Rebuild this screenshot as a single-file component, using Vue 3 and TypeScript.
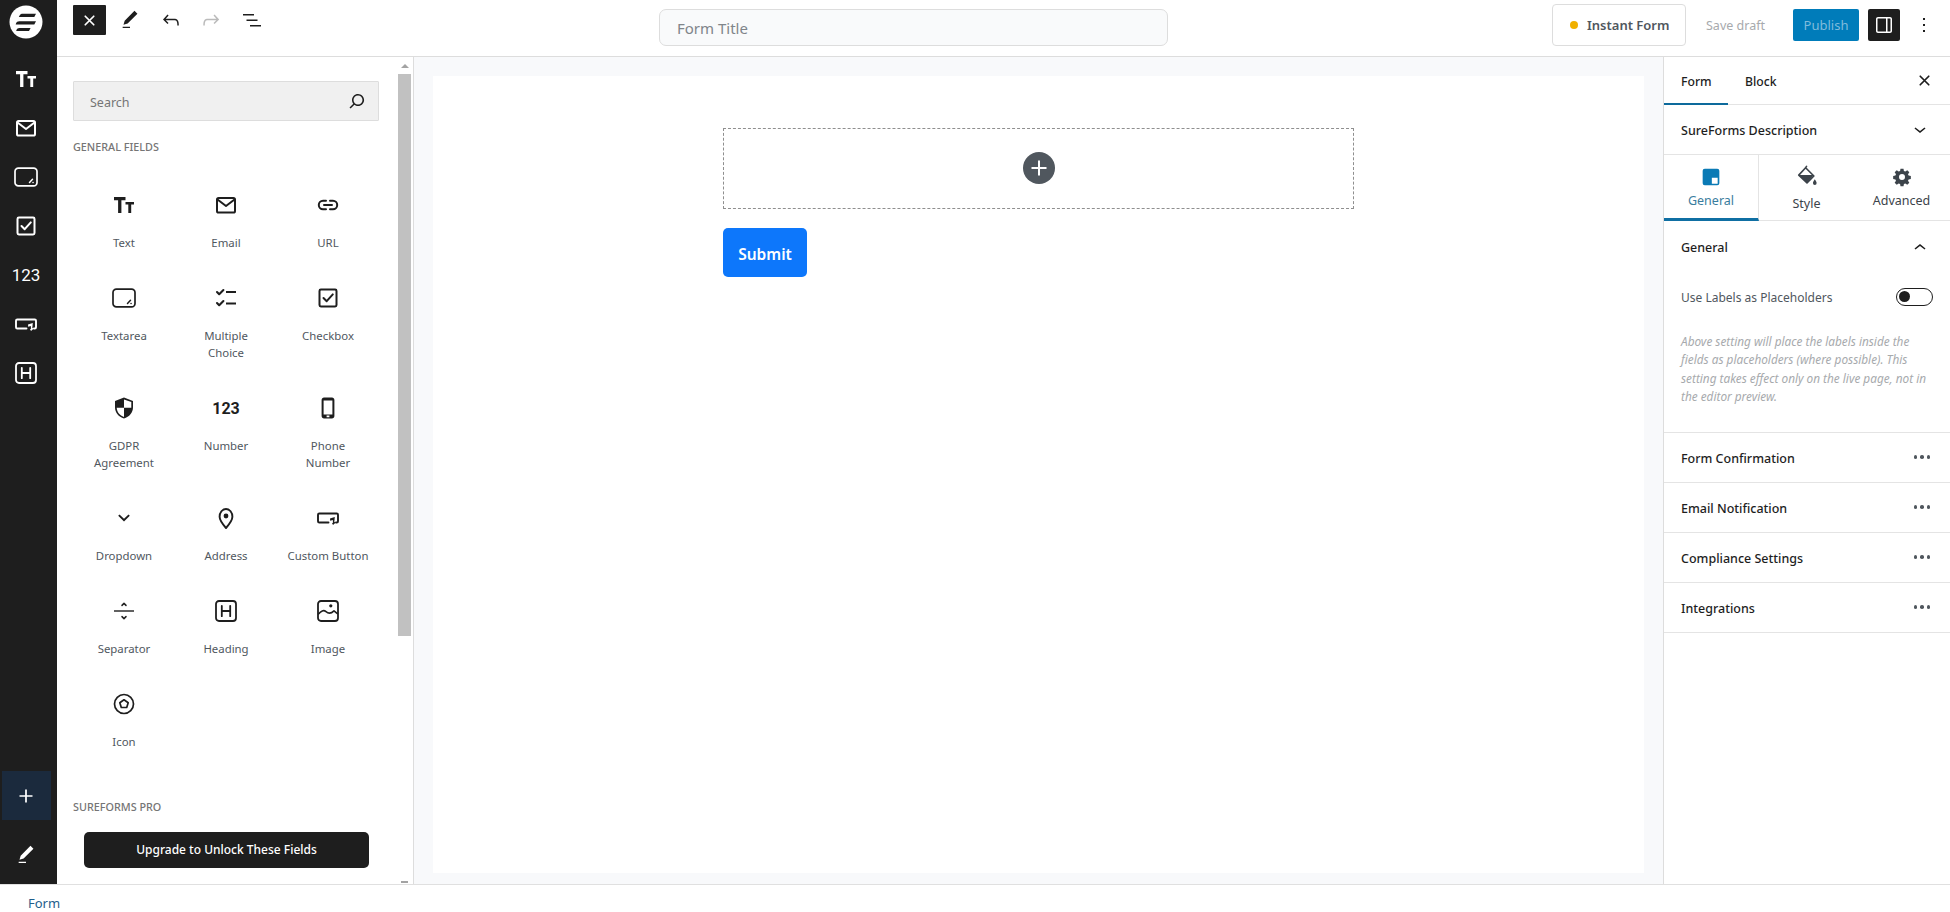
<script setup lang="ts">
import { h } from 'vue'

type Shape = { t: 'p' | 's' | 'r' | 'c'; d?: string; a?: Record<string, number | string> }

const Icon = (props: { name: string; size?: number }) => {
  const shapes: Shape[] = icons[props.name] || []
  return h(
    'svg',
    { viewBox: '0 0 24 24', width: props.size || 24, height: props.size || 24, class: 'ico' },
    shapes.map((s) => {
      if (s.t === 'p') return h('path', { d: s.d, fill: 'currentColor' })
      if (s.t === 's')
        return h('path', {
          d: s.d,
          fill: 'none',
          stroke: 'currentColor',
          'stroke-width': s.a?.w ?? 1.8,
          'stroke-linecap': 'round',
          'stroke-linejoin': 'round',
        })
      if (s.t === 'r') return h('rect', { fill: 'none', stroke: 'currentColor', 'stroke-width': 2, ...s.a })
      return h('circle', { fill: 'currentColor', ...s.a })
    }),
  )
}
Icon.props = ['name', 'size']

const icons: Record<string, Shape[]> = {
  text: [
    { t: 'p', d: 'M2 4h11.500v3.200h-4.100V20H6.100V7.200H2z' },
    { t: 'p', d: 'M13.500 9H22v2.500h-2.800V20h-2.900v-8.500h-2.800z' },
  ],
  email: [
    { t: 'r', a: { x: 3, y: 5, width: 18, height: 14.500, rx: 1.600 } },
    { t: 's', d: 'M3.500 6.500l8.500 6.500 8.500-6.500', a: { w: 2 } },
  ],
  url: [{ t: 's', d: 'M10 7.800H7a4.200 4.200 0 0 0 0 8.400h3M14 7.800h3a4.200 4.200 0 0 1 0 8.400h-3M8 12h8', a: { w: 2 } }],
  textarea: [
    { t: 'r', a: { x: 1, y: 3.200, width: 22, height: 17.600, rx: 3.400, 'stroke-width': 1.700 } },
    { t: 's', d: 'M15.500 17.500l3-3.200M19 17.500h.1', a: { w: 1.500 } },
  ],
  multi: [
    { t: 's', d: 'M3 6l2.200 2.200L9.400 4M3 17l2.200 2.200L9.400 15', a: { w: 2.100 } },
    { t: 'p', d: 'M12 5h10v2.100H12zM12 16.500h10v2.100H12z' },
  ],
  checkbox: [
    { t: 'r', a: { x: 3.500, y: 3.500, width: 17, height: 17, rx: 1.400, 'stroke-width': 2 } },
    { t: 's', d: 'M7.500 12l3.200 3.200L16.800 8.400', a: { w: 2 } },
  ],
  shield: [
    { t: 'p', d: 'M12 1.500l9 3.400v6.300c0 5.400-3.700 9.700-9 11.300-5.300-1.600-9-5.900-9-11.300V4.900zM12 3.400v8.400h7.300V6zM12 11.800H4.700c.2 4.300 3.200 7.700 7.300 9.200z' },
  ],
  phone: [
    { t: 'p', d: 'M8 1.500h8c1.300 0 2.400 1 2.400 2.400v16.200c0 1.400-1.100 2.400-2.400 2.400H8c-1.300 0-2.400-1-2.400-2.400V3.900c0-1.400 1.100-2.400 2.400-2.400zM7.600 4.600v14h8.800v-14zM10.600 19.600v1.600h2.800v-1.600z' },
  ],
  chevron: [{ t: 'p', d: 'M17.800 9.800L12 15.400 6.200 9.800l1.300-1.400 4.500 4.300 4.500-4.300z' }],
  pin: [
    { t: 's', d: 'M12 22c-3.800-4.300-6.400-7.800-6.400-11.200C5.600 6.400 8.300 3 12 3s6.400 3.400 6.400 7.800c0 3.400-2.600 6.900-6.400 11.200z', a: { w: 1.900 } },
    { t: 'c', a: { cx: 12, cy: 10, r: 2.400 } },
  ],
  button: [
    { t: 's', d: 'M12.500 16.500H3.300c-.7 0-1.300-.6-1.300-1.300V8.800C2 8.100 2.600 7.500 3.300 7.500h17.400c.7 0 1.300.6 1.300 1.300v6.400c0 .7-.6 1.300-1.300 1.300h-.7', a: { w: 1.900 } },
    { t: 'p', d: 'M14 12.500l4.800-1.500-.5 5 1.500.4-2.800 2.500-1-1.800 1-.4-.2-2.600-2.600.6z' },
  ],
  separator: [
    { t: 'p', d: 'M2 11.300h20v1.400H2z' },
    { t: 's', d: 'M10 6.400l2-2 2 2M10 17.600l2 2 2-2', a: { w: 1.500 } },
  ],
  heading: [
    { t: 'r', a: { x: 2, y: 2, width: 20, height: 20, rx: 3, 'stroke-width': 1.800 } },
    { t: 's', d: 'M7.800 6.800v10.400M16.200 6.800v10.400M7.800 12h8.400', a: { w: 1.800 } },
  ],
  image: [
    { t: 'r', a: { x: 2, y: 2, width: 20, height: 20, rx: 3, 'stroke-width': 1.800 } },
    { t: 's', d: 'M2.500 15c2.500-3 5-4.500 7.500-2.400 2.800 2.400 5.500 1.600 8-.8l3.400 2.800', a: { w: 1.600 } },
    { t: 'c', a: { cx: 14.800, cy: 6.800, r: 1.600 } },
  ],
  star: [
    { t: 'r', a: { x: 2.500, y: 2.500, width: 19, height: 19, rx: 9.500, 'stroke-width': 1.700 } },
    { t: 's', d: 'M12 7.800l4.200 3-1.500 4.700H9.300l-1.500-4.700z', a: { w: 1.700 } },
  ],
  pen: [{ t: 'p', d: 'M20.100 5.100L16.900 2 6.200 12.700l-1.300 4.400 4.500-1.300L20.100 5.100zM4 20.800h8v-1.500H4v1.500z' }],
  undo: [{ t: 'p', d: 'M18.300 11.700c-.6-.6-1.400-.9-2.300-.9H6.700l2.900-3.300-1.100-1-4.500 5L8.500 16l1-1-2.700-2.700H16c.5 0 .9.2 1.300.5 1 1 1 3.400 1 4.500v.3h1.500v-.2c0-1.500 0-4.300-1.500-5.700z' }],
  redo: [{ t: 'p', d: 'M15.600 6.500l-1.100 1 2.900 3.300H8c-.9 0-1.700.3-2.300.9-1.400 1.500-1.400 4.200-1.400 5.600v.2h1.500v-.3c0-1.100 0-3.500 1-4.500.3-.3.700-.5 1.300-.5h9.200L14.500 15l1.100 1.100 4.600-4.600-4.600-5z' }],
  list: [{ t: 'p', d: 'M3 6h11v1.500H3V6zm3.500 5.500h11V13h-11v-1.500zM21 17H10v1.500h11V17z' }],
  close: [{ t: 's', d: 'M6 6l12 12M18 6L6 18', a: { w: 2.400 } }],
  plus: [{ t: 'p', d: 'M18 11.200h-5.200V6h-1.600v5.200H6v1.600h5.200V18h1.600v-5.200H18z' }],
  kebab: [{ t: 'p', d: 'M13 19h-2v-2h2v2zm0-6h-2v-2h2v2zm0-6h-2V5h2v2z' }],
  search: [{ t: 'p', d: 'M13 5c-3.300 0-6 2.700-6 6 0 1.400.5 2.700 1.300 3.700l-3.800 3.800 1.100 1.100 3.800-3.800c1 .8 2.300 1.300 3.700 1.300 3.300 0 6-2.700 6-6S16.300 5 13 5zm0 10.500c-2.500 0-4.500-2-4.500-4.500s2-4.500 4.500-4.500 4.500 2 4.500 4.500-2 4.500-4.500 4.500z' }],
  down: [{ t: 'p', d: 'M17.500 10.600L12 15l-5.500-4.400.9-1.200L12 13l4.500-3.600 1 1.200z' }],
  up: [{ t: 'p', d: 'M6.500 13.400L12 9l5.500 4.400-.9 1.200L12 11l-4.500 3.600-1-1.200z' }],
  sidebar: [{ t: 'p', d: 'M18 4H6c-1.100 0-2 .9-2 2v12c0 1.100.9 2 2 2h12c1.100 0 2-.9 2-2V6c0-1.100-.9-2-2-2zm-4 14.500H6c-.3 0-.5-.2-.5-.5V6c0-.3.2-.5.5-.5h8v13zm4.500-.5c0 .3-.2.5-.5.5h-2.500v-13H18c.3 0 .5.2.5.5v12z' }],
  layout: [{ t: 'p', d: 'M4.500 2h15A2.500 2.500 0 0 1 22 4.500v15a2.500 2.500 0 0 1-2.500 2.500h-15A2.500 2.500 0 0 1 2 19.500v-15A2.500 2.500 0 0 1 4.500 2zM13 13v7h7v-7z' }],
  bucket: [
    { t: 's', d: 'M11.500 1.500L10 3.500M10.500 3L19.500 12 12 19.500 3 11z', a: { w: 1.800 } },
    { t: 'p', d: 'M3 11h16.500L12 19.500z' },
    { t: 'p', d: 'M20.500 15.500c1.300 2 2 3 2 4.200a2 2 0 0 1-4 0c0-1.200.7-2.200 2-4.200z' },
  ],
  gear: [{ t: 'p', d: 'M10.200 2h3.600l.5 2.700 1.700.7 2.300-1.600 2.500 2.500-1.600 2.300.7 1.700 2.700.5v3.600l-2.700.5-.7 1.700 1.600 2.300-2.500 2.500-2.300-1.600-1.700.7-.5 2.700h-3.600l-.5-2.700-1.700-.7-2.300 1.600-2.500-2.500 1.600-2.300-.7-1.700-2.700-.5v-3.600l2.700-.5.7-1.700-1.600-2.300 2.500-2.500 2.300 1.600 1.700-.7zM12 8.400a3.600 3.600 0 1 0 0 7.200 3.600 3.600 0 0 0 0-7.200z' }],
}

const rail = ['text', 'email', 'textarea', 'checkbox', 'num', 'button', 'heading']

const fields = [
  { icon: 'text', label: 'Text' },
  { icon: 'email', label: 'Email' },
  { icon: 'url', label: 'URL' },
  { icon: 'textarea', label: 'Textarea' },
  { icon: 'multi', label: 'Multiple\nChoice' },
  { icon: 'checkbox', label: 'Checkbox' },
  { icon: 'shield', label: 'GDPR\nAgreement' },
  { icon: 'num', label: 'Number' },
  { icon: 'phone', label: 'Phone\nNumber' },
  { icon: 'chevron', label: 'Dropdown' },
  { icon: 'pin', label: 'Address' },
  { icon: 'button', label: 'Custom Button' },
  { icon: 'separator', label: 'Separator' },
  { icon: 'heading', label: 'Heading' },
  { icon: 'image', label: 'Image' },
  { icon: 'star', label: 'Icon' },
]

const panels = ['Form Confirmation', 'Email Notification', 'Compliance Settings', 'Integrations']
</script>

<template>
  <div class="page">
    <div class="main">
      <aside class="rail">
        <div class="logo">
          <svg viewBox="0 0 34 34" width="34" height="34">
            <circle cx="17" cy="17" r="16.500" fill="#fff" />
            <path d="M10.500 10.800c.6-1.400 1.800-2 3.200-2H27l-1.700 3.200H9.800zM7 18.600c.5-1.600 1.700-2.400 3.200-2.400H27l-1.700 3.300H6.700zM7.400 25.200c.5-1.400 1.600-2.200 3-2.200h11.200L20 26H7.200z" fill="#1e1e1e" />
          </svg>
        </div>
        <div class="rail-list">
          <div v-for="r in rail" :key="r" class="rail-item">
            <span v-if="r === 'num'" class="rail-num">123</span>
            <Icon v-else :name="r" />
          </div>
        </div>
        <div class="rail-add"><Icon name="plus" :size="26" /></div>
        <div class="rail-pen"><Icon name="pen" :size="22" /></div>
      </aside>

      <div class="work">
        <header class="top">
          <div class="top-left">
            <button class="tool tool-x"><Icon name="close" :size="17" /></button>
            <button class="tool"><Icon name="pen" :size="22" /></button>
            <button class="tool"><Icon name="undo" /></button>
            <button class="tool tool-off"><Icon name="redo" /></button>
            <button class="tool"><Icon name="list" /></button>
          </div>
          <div class="title-input">Form Title</div>
          <div class="top-right">
            <div class="instant"><span class="dot"></span>Instant Form</div>
            <span class="draft">Save draft</span>
            <button class="publish">Publish</button>
            <button class="side-toggle"><Icon name="sidebar" /></button>
            <span class="more"><Icon name="kebab" /></span>
          </div>
        </header>

        <div class="body">
          <section class="inserter">
            <div class="ins-scroll">
              <div class="search">
                <span>Search</span>
                <Icon name="search" :size="24" />
              </div>
              <div class="group-title first">General Fields</div>
              <div class="grid">
                <div v-for="f in fields" :key="f.label" class="field">
                  <div class="field-icon">
                    <span v-if="f.icon === 'num'" class="num">123</span>
                    <Icon v-else :name="f.icon" />
                  </div>
                  <div class="field-label">{{ f.label }}</div>
                </div>
              </div>
              <div class="group-title pro">SureForms Pro</div>
              <button class="upgrade">Upgrade to Unlock These Fields</button>
            </div>
            <div class="scrollbar">
              <span class="arrow arrow-up"></span>
              <span class="thumb"></span>
              <span class="arrow arrow-down"></span>
            </div>
          </section>

          <section class="canvas">
            <div class="sheet">
              <div class="form">
                <div class="dropzone">
                  <span class="add"><Icon name="plus" :size="30" /></span>
                </div>
                <button class="submit">Submit</button>
              </div>
            </div>
          </section>

          <aside class="side">
            <div class="side-tabs">
              <span class="side-tab active">Form</span>
              <span class="side-tab">Block</span>
              <span class="side-close"><Icon name="close" :size="17" /></span>
            </div>
            <div class="desc">
              <span>SureForms Description</span>
              <Icon name="down" />
            </div>
            <div class="modes">
              <div class="mode on">
                <Icon name="layout" :size="20" />
                <span>General</span>
              </div>
              <div class="mode style">
                <Icon name="bucket" :size="22" />
                <span>Style</span>
              </div>
              <div class="mode">
                <Icon name="gear" :size="20" />
                <span>Advanced</span>
              </div>
            </div>
            <div class="general">
              <div class="general-head">
                <span>General</span>
                <Icon name="up" />
              </div>
              <div class="toggle-row">
                <span>Use Labels as Placeholders</span>
                <span class="toggle"><i></i></span>
              </div>
              <p class="hint">Above setting will place the labels inside the fields as placeholders (where possible). This setting takes effect only on the live page, not in the editor preview.</p>
            </div>
            <div v-for="p in panels" :key="p" class="panel">
              <span>{{ p }}</span>
              <span class="dots"><i></i><i></i><i></i></span>
            </div>
          </aside>
        </div>
      </div>
    </div>
    <footer class="foot"><span>Form</span></footer>
  </div>
</template>

<style>
html, body { margin: 0; overflow: hidden; background: #fff; }
</style>

<style scoped>
.page {
  width: 1950px;
  height: 912px;
  display: flex;
  flex-direction: column;
  font-family: "Noto Sans", "Open Sans", sans-serif;
  color: #1e1e1e;
  overflow: hidden;
}
.ico { display: block; flex: none; }
button { border: 0; font-family: inherit; padding: 0; cursor: pointer; }
.main { height: 884px; display: flex; flex: none; }
.rail {
  width: 57px;
  box-sizing: border-box;
  padding-right: 5px;
  background: #1e1e1e;
  color: #fff;
  display: flex;
  flex-direction: column;
  align-items: center;
  flex: none;
}
.logo { height: 34px; margin-top: 5px; }
.rail-list { margin-top: 15px; display: flex; flex-direction: column; }
.rail-item { height: 49px; display: flex; align-items: center; justify-content: center; }
.rail-num { font-size: 17px; font-family: "Roboto", sans-serif; font-weight: 400; }
.rail-add {
  margin-top: auto;
  width: 49px;
  height: 49px;
  background: #1b2a3d;
  display: flex;
  align-items: center;
  justify-content: center;
}
.rail-pen { height: 64px; box-sizing: border-box; padding-top: 6px; display: flex; align-items: center; justify-content: center; }
.work { flex: 1; min-width: 0; display: flex; flex-direction: column; }
.top {
  height: 57px;
  flex: none;
  box-sizing: border-box;
  border-bottom: 1px solid #ddd;
  display: flex;
  align-items: flex-start;
}
.top-left { display: flex; padding: 5px 0 0 16px; width: 602px; box-sizing: border-box; flex: none; }
.tool {
  width: 40.500px;
  height: 30px;
  background: none;
  color: #1e1e1e;
  display: flex;
  align-items: center;
  justify-content: center;
}
.tool-x { width: 33px; background: #1e1e1e; color: #fff; margin-right: 4px; border-radius: 1px; }
.tool-off { color: #bbb; }
.title-input {
  width: 509px;
  height: 37px;
  margin-top: 9px;
  box-sizing: border-box;
  border: 1px solid #ddd;
  border-radius: 7px;
  background: #f9fafb;
  color: #80858a;
  font-size: 15px;
  line-height: 36px;
  padding-left: 17px;
  flex: none;
}
.top-right { flex: 1; display: flex; align-items: flex-start; padding-left: 384px; }
.instant {
  width: 134px;
  height: 42px;
  margin-top: 4px;
  box-sizing: border-box;
  border: 1px solid #ddd;
  border-radius: 4px;
  display: flex;
  align-items: center;
  padding-left: 17px;
  gap: 9px;
  font-size: 13px;
  font-weight: 600;
  color: #50575e;
  flex: none;
}
.dot { width: 8px; height: 8px; border-radius: 50%; background: #f0b000; flex: none; }
.draft { font-size: 12.500px; color: #a7aaad; margin: 17px 0 0 20px; width: 87px; flex: none; line-height: 18px; }
.publish {
  width: 66px;
  height: 32px;
  margin-top: 9px;
  background: #007cba;
  color: #7fbbdc;
  font-size: 13px;
  border-radius: 2px;
  flex: none;
}
.side-toggle {
  width: 32px;
  height: 32px;
  margin: 9px 0 0 9px;
  background: #1e1e1e;
  color: #fff;
  border-radius: 2px;
  display: flex;
  align-items: center;
  justify-content: center;
  flex: none;
}
.more { margin: 13px 0 0 12px; color: #1e1e1e; }
.body { flex: 1; min-height: 0; display: flex; }
.inserter { width: 357px; flex: none; display: flex; box-sizing: border-box; border-right: 1px solid #ddd; }
.ins-scroll { width: 340px; flex: none; box-sizing: border-box; padding: 24px 16px 0; overflow: hidden; }
.search {
  height: 40px;
  width: 306px;
  box-sizing: border-box;
  background: #f0f0f0;
  border: 1px solid #ddd;
  border-radius: 1px;
  display: flex;
  align-items: center;
  justify-content: space-between;
  padding: 0 9px 0 16px;
  color: #757575;
  font-size: 12.500px;
}
.search span { padding-top: 2px; }
.search .ico { color: #1e1e1e; }
.group-title {
  font-size: 10.800px;
  text-transform: uppercase;
  color: #757575;
  font-weight: 500;
  line-height: 16px;
}
.first { margin-top: 18px; }
.grid {
  width: 306px;
  margin-top: 22px;
  display: grid;
  grid-template-columns: repeat(3, 102px);
  align-items: start;
}
.field {
  padding: 16px 0 18.800px;
  display: flex;
  flex-direction: column;
  align-items: center;
  text-align: center;
  box-sizing: border-box;
}
.field-icon { height: 24px; display: flex; align-items: center; justify-content: center; margin-bottom: 18px; }
.num { font-family: "Roboto", sans-serif; font-weight: 700; font-size: 16px; color: #1e1e1e; }
.field-label { font-size: 11.400px; line-height: 16.500px; color: #50575e; white-space: pre-line; }
.pro { margin-top: 29px; }
.upgrade {
  display: block;
  width: 285px;
  height: 36px;
  margin: 17px 0 0 11px;
  background: #1e1e1e;
  color: #fff;
  border-radius: 5px;
  font-size: 12px;
  font-weight: 500;
}
.scrollbar { width: 13px; margin-left: 1px; flex: none; display: flex; flex-direction: column; }
.arrow { height: 17px; flex: none; display: flex; align-items: center; justify-content: center; }
.arrow-up::before {
  content: "";
  border: 4px solid transparent;
  border-bottom: 4px solid #a3a3a3;
  border-top: 0;
}
.arrow-down { margin-top: auto; height: 3px; align-items: flex-start; }
.arrow-down::before { content: ""; width: 7px; height: 2px; background: #a3a3a3; }
.thumb { width: 13px; height: 562px; background: #c1c1c1; flex: none; }
.canvas {
  flex: 1;
  min-width: 0;
  background: #f8f9fb;
  box-sizing: border-box;
  padding: 19px 19px 11px;
  display: flex;
}
.sheet { flex: 1; background: #fff; padding-top: 52px; }
.form { width: 631px; margin: 0 auto; }
.dropzone {
  height: 81px;
  box-sizing: border-box;
  border: 1px dashed #8f8f8f;
  display: flex;
  align-items: center;
  justify-content: center;
}
.add {
  width: 32px;
  height: 32px;
  border-radius: 50%;
  background: #50575e;
  color: #fff;
  display: flex;
  align-items: center;
  justify-content: center;
  margin-top: -1px;
}
.submit {
  display: block;
  width: 84px;
  height: 49px;
  margin-top: 19px;
  padding-top: 2px;
  background: #0d77fb;
  color: #fff;
  border-radius: 5px;
  font-size: 15.500px;
  font-weight: 600;
}
.side {
  width: 287px;
  flex: none;
  box-sizing: border-box;
  border-left: 1px solid #ddd;
  font-size: 13px;
}
.side-tabs {
  height: 48px;
  box-sizing: border-box;
  border-bottom: 1px solid #e4e4e4;
  display: flex;
  align-items: stretch;
}
.side-tab {
  width: 64px;
  box-sizing: border-box;
  padding: 16px 0 0 17px;
  font-weight: 500;
  font-size: 12.200px;
  line-height: 18px;
}
.side-tab.active { box-shadow: inset 0 -2px 0 #0d6a9c; height: 48px; }
.side-close { margin-left: auto; margin-right: 17px; padding-top: 15px; }
.desc {
  height: 50px;
  box-sizing: border-box;
  border-bottom: 1px solid #e4e4e4;
  display: flex;
  align-items: center;
  justify-content: space-between;
  padding: 1px 18px 0 17px;
  font-weight: 500;
  font-size: 12.500px;
}
.modes { height: 66px; box-sizing: border-box; border-bottom: 1px solid #e4e4e4; display: flex; }
.mode {
  width: 95px;
  box-sizing: border-box;
  display: flex;
  flex-direction: column;
  align-items: center;
  padding-top: 12px;
  font-size: 12.500px;
  line-height: 18px;
  color: #3c434a;
  gap: 5px;
}
.mode .ico { color: #3c434a; }
.mode.on {
  height: 66px;
  border-right: 1px solid #e4e4e4;
  border-bottom: 3px solid #0f6fa3;
  color: #3a7d9e;
}
.mode.on .ico { color: #0a7ab5; }
.mode.style { gap: 8px; padding-top: 10px; }
.general { height: 212px; box-sizing: border-box; border-bottom: 1px solid #e4e4e4; padding: 0 17px; }
.general-head {
  height: 52px;
  display: flex;
  align-items: center;
  justify-content: space-between;
  font-weight: 500;
  font-size: 12.500px;
  padding-right: 1px;
}
.toggle-row {
  display: flex;
  align-items: center;
  justify-content: space-between;
  margin-top: 15px;
  height: 18px;
  font-size: 12px;
  color: #50575e;
}
.toggle {
  width: 37px;
  height: 18px;
  box-sizing: border-box;
  border: 1.500px solid #1e1e1e;
  border-radius: 9px;
  position: relative;
}
.toggle i {
  position: absolute;
  left: 2px;
  top: 2px;
  width: 11px;
  height: 11px;
  border-radius: 50%;
  background: #1e1e1e;
}
.hint {
  margin: 26px 0 0;
  font-size: 11.800px;
  line-height: 18.300px;
  font-style: italic;
  color: #a7aaad;
  width: 252px;
}
.panel {
  height: 50px;
  box-sizing: border-box;
  border-bottom: 1px solid #e4e4e4;
  display: flex;
  align-items: center;
  justify-content: space-between;
  padding: 2px 20px 0 17px;
  font-weight: 500;
  font-size: 12.500px;
}
.dots { display: flex; gap: 3px; margin-top: -3px; }
.dots i { width: 3.500px; height: 3.500px; border-radius: 50%; background: #50575e; }
.foot {
  flex: 1;
  border-top: 1px solid #e0e0e0;
  box-sizing: border-box;
  padding: 9px 0 0 28px;
  font-size: 13px;
  line-height: 18px;
  color: #1f5e8c;
}
</style>
